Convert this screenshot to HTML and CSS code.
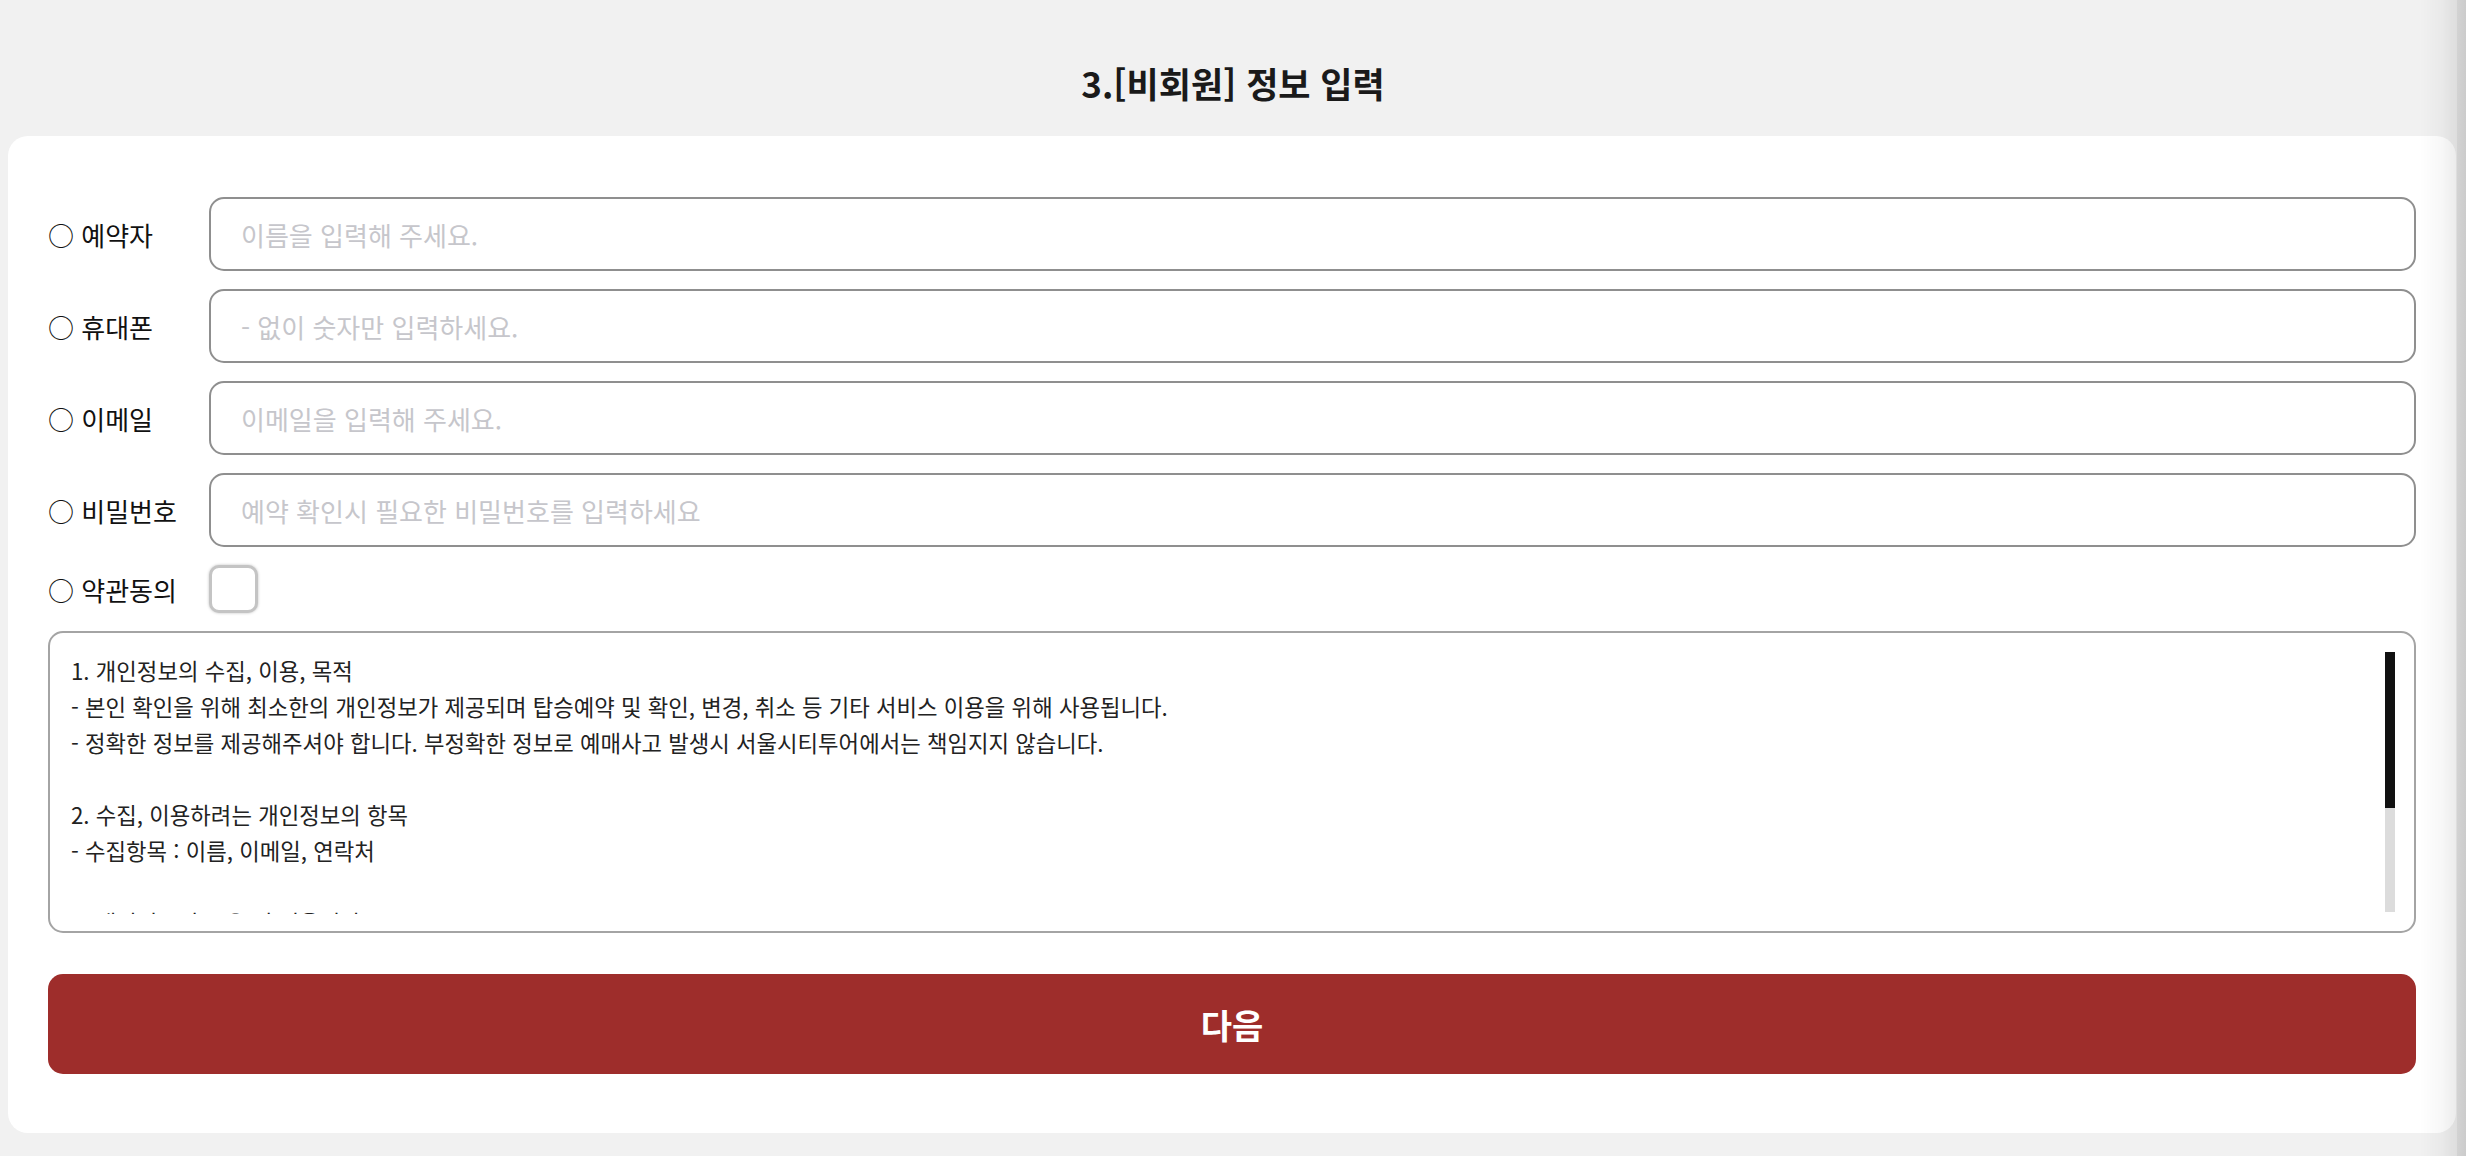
FILE: index.html
```html
<!DOCTYPE html>
<html lang="ko">
  <head>
    <meta charset="utf-8" />
    <title>비회원 정보 입력</title>
    <meta name="viewport" content="width=device-width, initial-scale=1" />
    <link rel="stylesheet" href="styles.css">
  </head>
  <body>
    <header class="step-title">
      <h1>3.[비회원] 정보 입력</h1>
    </header>
    <main class="card">
      <form class="guest-form" action="#" method="post">
        <div class="form-row">
          <label for="name">○ 예약자</label>
          <input type="text" id="name" name="name" placeholder="이름을 입력해 주세요." />
        </div>
        <div class="form-row">
          <label for="phone">○ 휴대폰</label>
          <input type="text" id="phone" name="phone" placeholder="- 없이 숫자만 입력하세요." />
        </div>
        <div class="form-row">
          <label for="email">○ 이메일</label>
          <input type="text" id="email" name="email" placeholder="이메일을 입력해 주세요." />
        </div>
        <div class="form-row">
          <label for="password">○ 비밀번호</label>
          <input type="password" id="password" name="password" placeholder="예약 확인시 필요한 비밀번호를 입력하세요" />
        </div>
        <div class="form-row">
          <label for="agree">○ 약관동의</label>
          <input type="checkbox" id="agree" name="agree" />
        </div>
        <div class="terms">
          <div class="terms-text">
            <p>1. 개인정보의 수집, 이용, 목적</p>
            <p>- 본인 확인을 위해 최소한의 개인정보가 제공되며 탑승예약 및 확인, 변경, 취소 등 기타 서비스 이용을 위해 사용됩니다.</p>
            <p>- 정확한 정보를 제공해주셔야 합니다. 부정확한 정보로 예매사고 발생시 서울시티투어에서는 책임지지 않습니다.</p>
            <p>&nbsp;</p>
            <p>2. 수집, 이용하려는 개인정보의 항목</p>
            <p>- 수집항목 : 이름, 이메일, 연락처</p>
            <p>&nbsp;</p>
            <p>3. 개인정보의 보유 및 이용기간</p>
          </div>
          <div class="terms-bar">
            <div class="terms-thumb"></div>
          </div>
        </div>
        <button type="submit" class="next-btn">다음</button>
      </form>
    </main>
  </body>
</html>
```

FILE: styles.css
```css
html,
body {
  margin: 0;
  padding: 0;
}
body {
  background-color: #f1f1f1;
  font-family: "Noto Sans CJK KR", "Noto Sans", sans-serif;
  color: #1a1a1a;
  min-height: 100vh;
}
body::after {
  content: "";
  position: fixed;
  top: 0;
  right: 0;
  bottom: 0;
  width: 46px;
  pointer-events: none;
  background: linear-gradient(
    to right,
    rgba(0, 0, 0, 0) 0,
    rgba(0, 0, 0, 0.03) 22px,
    rgba(0, 0, 0, 0.08) 37px,
    #d3d3d3 37px,
    #cbcbcb 46px
  );
}
.step-title {
  padding: 58px 0 29px;
  text-align: center;
}
.step-title h1 {
  margin: 0;
  font-size: 35px;
  line-height: 49px;
  font-weight: 700;
  color: #1a1a1a;
}
.card {
  margin: 0 10px 0 8px;
  padding: 61px 40px 59px;
  background-color: #fff;
  border-radius: 20px;
}
.guest-form {
  display: flex;
  flex-direction: column;
  gap: 18px;
}
.form-row {
  display: grid;
  grid-template-columns: 161px 1fr;
  align-items: center;
}
.form-row label {
  font-size: 26px;
  color: #111;
  white-space: nowrap;
}
.form-row input[type="text"],
.form-row input[type="password"] {
  box-sizing: border-box;
  height: 74px;
  width: 100%;
  margin: 0;
  padding: 0 30px;
  border: 2px solid #8f8f8f;
  border-radius: 15px;
  font-family: inherit;
  font-size: 26px;
  color: #222;
  outline: none;
}
.form-row input::placeholder {
  color: #c6c6cb;
}
.form-row input[type="checkbox"] {
  appearance: none;
  box-sizing: border-box;
  width: 49px;
  height: 48px;
  margin: 0;
  border: 3px solid #c4c4c4;
  border-radius: 10px;
  box-shadow: 0 0 3px rgba(0, 0, 0, 0.25);
  background: #fff;
}
.terms {
  box-sizing: border-box;
  display: flex;
  gap: 20px;
  height: 302px;
  padding: 19px 19px 17px 21px;
  border: 2px solid #a4a4a4;
  border-radius: 15px;
}
.terms-text {
  flex: 1;
  overflow: hidden;
  font-size: 22.3px;
  line-height: 36px;
  color: #222;
}
.terms-text p {
  margin: 0;
  white-space: nowrap;
}
.terms-bar {
  flex: none;
  width: 10px;
  height: 260px;
  background-color: #dcdcdc;
}
.terms-thumb {
  height: 156px;
  background-color: #111;
}
.next-btn {
  height: 100px;
  margin-top: 23px;
  border: 0;
  border-radius: 15px;
  background-color: #9e2d2b;
  color: #fff;
  font-family: inherit;
  font-size: 34px;
  font-weight: 700;
  cursor: pointer;
}
```
